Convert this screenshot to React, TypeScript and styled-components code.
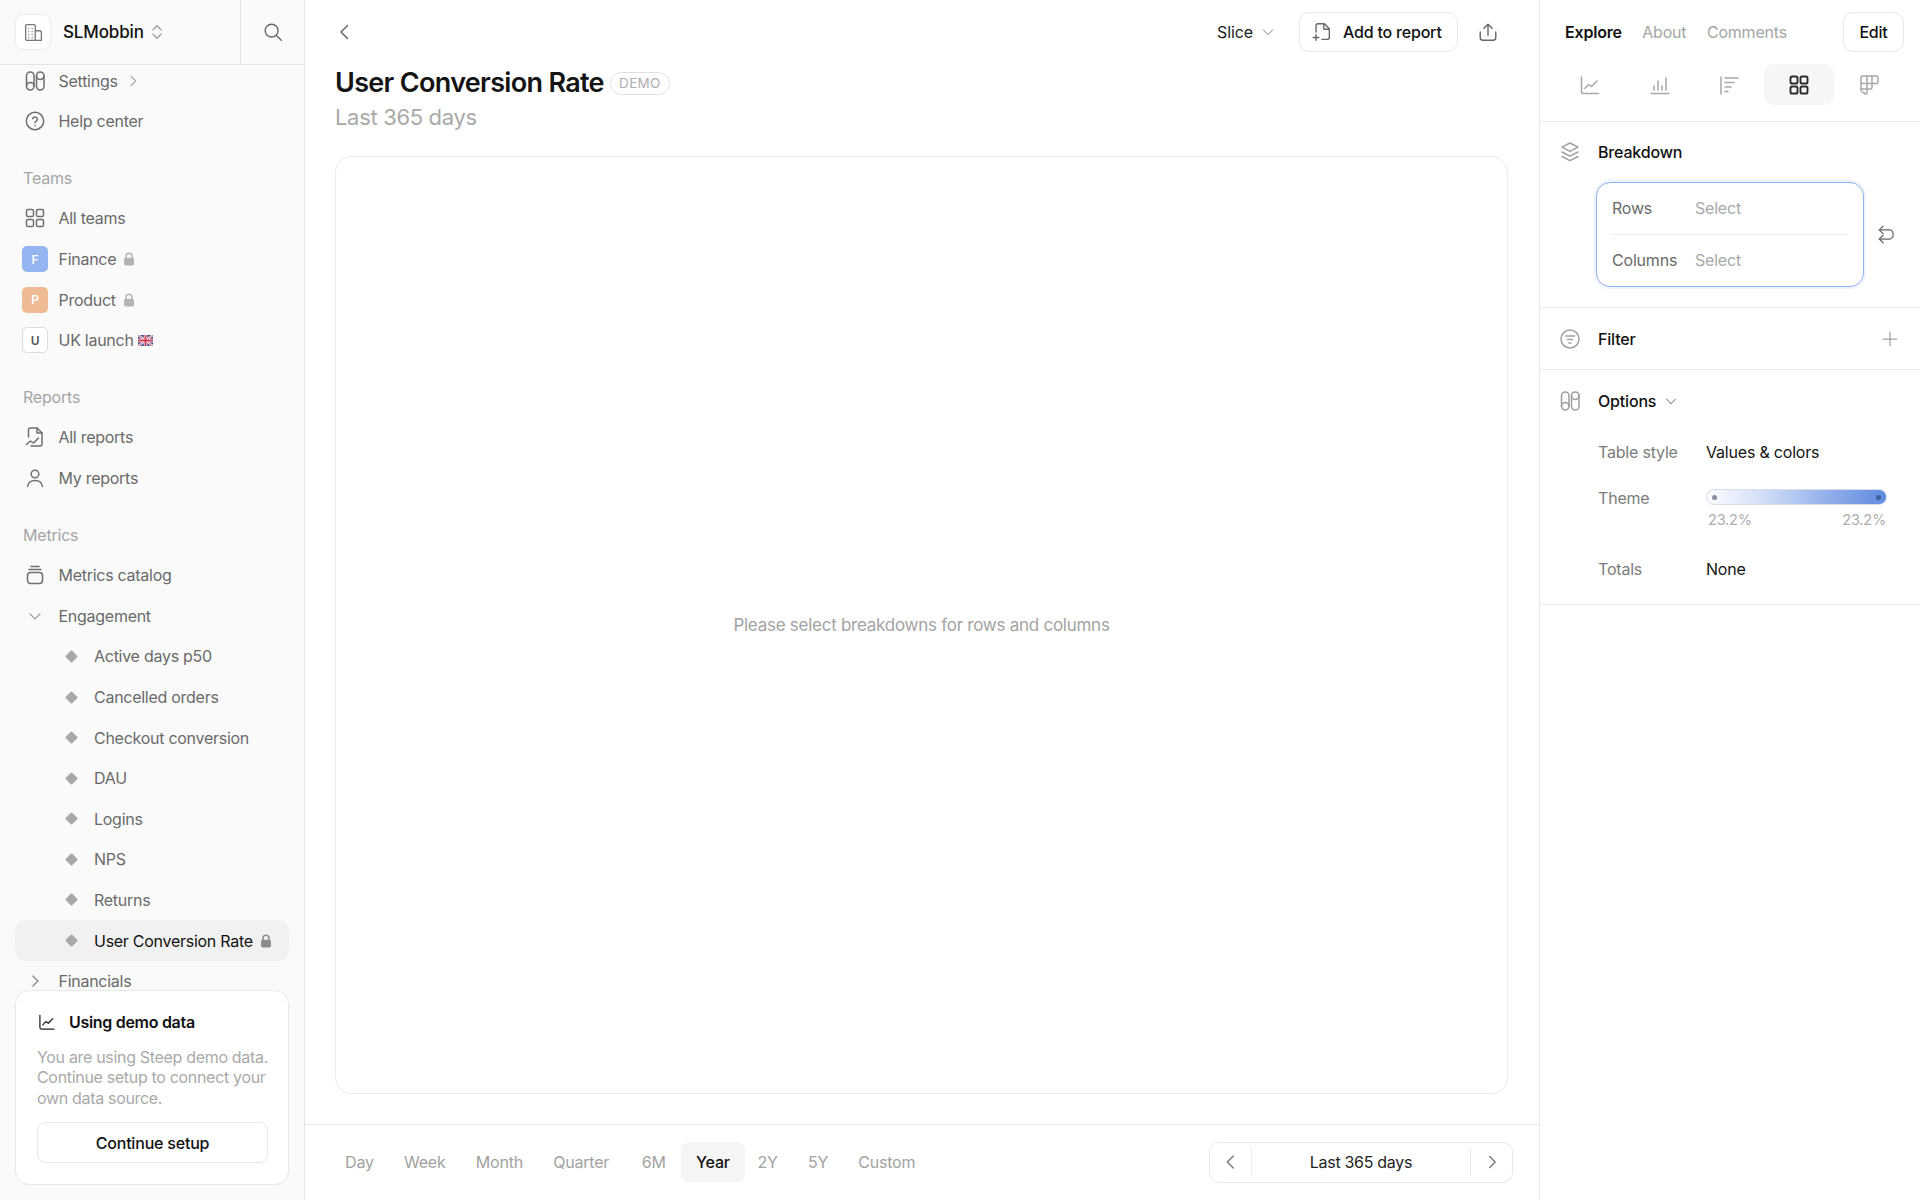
import React from "react";
import styled, { createGlobalStyle } from "styled-components";

const Global = createGlobalStyle`
  html, body { margin: 0; padding: 0; background: #fff; }
  body { font-family: Inter, "Liberation Sans", sans-serif; font-size: 16px; color: #111; -webkit-font-smoothing: antialiased; }
  * { box-sizing: border-box; }
`;

const Page = styled.div`display: flex; width: 1920px; height: 1200px; overflow: hidden;`;

/* ---------- icons ---------- */
const Svg = styled.svg<{ $c?: string; $w?: number }>`
  display: block; flex: none; fill: none; stroke: ${p => p.$c || "#6f6f6f"};
  stroke-width: ${p => p.$w || 1.5}; stroke-linecap: round; stroke-linejoin: round;
`;
type IP = { s?: number; c?: string; w?: number };
const I = ({ s = 24, c, w, children }: IP & { children: React.ReactNode }) => (
  <Svg width={s} height={s} viewBox="0 0 24 24" $c={c} $w={w}>{children}</Svg>
);
const Pills = (p: IP) => (
  <I {...p}><rect x="3.5" y="3" width="7.5" height="18" rx="3.75" /><path d="M3.5 17.250a3.750 3.750 0 0 1 7.500 0" /><rect x="13.5" y="3" width="7.5" height="18" rx="3.75" /><path d="M13.500 6.750a3.750 3.750 0 0 0 7.500 0" /></I>
);
const Help = (p: IP) => (
  <I {...p}><circle cx="12" cy="12" r="8.7" /><path d="M9.6 9.6a2.5 2.5 0 0 1 4.8.8c0 1.6-2.4 2-2.4 3.4" /><path d="M12 16.6v.1" /></I>
);
const Grid = (p: IP) => (
  <I {...p}><rect x="3.5" y="3.5" width="7" height="7" rx="1.6" /><rect x="13.5" y="3.5" width="7" height="7" rx="1.6" /><rect x="3.5" y="13.5" width="7" height="7" rx="1.6" /><rect x="13.5" y="13.5" width="7" height="7" rx="1.6" /></I>
);
const Report = (p: IP) => (
  <I {...p}><path d="M5.5 12V5a2 2 0 0 1 2-2h6.5l5 5v11a2 2 0 0 1-2 2H8" /><path d="M14 3v5h5" /><path d="M3.5 19.5l4-3.5 3 2 5-5" /></I>
);
const User = (p: IP) => (
  <I {...p}><circle cx="12" cy="8" r="3.8" /><path d="M4.5 20.5c.6-4 3.6-6 7.5-6s6.900 2 7.500 6" /></I>
);
const Catalog = (p: IP) => (
  <I {...p}><path d="M8 3.500h8M6 6.500h12" /><rect x="4.500" y="9.500" width="15" height="11" rx="3" /></I>
);
const ChevD = (p: IP) => <I {...p}><path d="M6 9.500l6 6 6-6" /></I>;
const ChevR = (p: IP) => <I {...p}><path d="M9.500 6l6 6-6 6" /></I>;
const ChevL = (p: IP) => <I {...p}><path d="M14.500 5.500L8 12l6.500 6.500" /></I>;
const LineChart = (p: IP) => (
  <I {...p}><path d="M3.500 4v14.500a2 2 0 0 0 2 2h15" /><path d="M7 15.500l3.500-4 3 2 5.500-5.500" /></I>
);
const Bars = (p: IP) => (
  <I {...p}><path d="M3 20.500h18M6 17v-4M10 17V8M14 17v-4M18 17V5" /></I>
);
const Sorted = (p: IP) => (
  <I {...p}><path d="M4 4v17M8 5h13M8 9.500h9M8 14h6M8 18.500h3" /></I>
);
const Pivot = (p: IP) => (
  <I {...p}><path d="M4 5a2 2 0 0 1 2-2h13a2 2 0 0 1 2 2v4a1.500 1.500 0 0 1-1.500 1.500H15v4a1.500 1.500 0 0 1-1.500 1.500H10v3.500a1.500 1.500 0 0 1-3 0A3 3 0 0 1 4 17z" /><path d="M4 10.500h11M4 16h6M10 3v13M15 3v7.500" /></I>
);
const Layers = (p: IP) => (
  <I {...p}><path d="M12 3l8 4.200-8 4.200-8-4.200z" /><path d="M4 12l8 4.200 8-4.200" /><path d="M4 16.500l8 4.200 8-4.200" /></I>
);
const FilterCircle = (p: IP) => (
  <I {...p}><circle cx="12" cy="12" r="9" /><path d="M7.500 9h9M9.500 12.500h5M11 16h2" /></I>
);
const Swap = (p: IP) => (
  <I {...p}><path d="M8.500 2.500L4 7l4.500 4.500" /><path d="M4 7h12a4.500 4.500 0 0 1 4.500 4.500v2A4.500 4.500 0 0 1 16 18H4" /><path d="M8.500 13.500L4 18l4.500 4.500" /></I>
);
const Plus = (p: IP) => <I {...p}><path d="M12 4v16M4 12h16" /></I>;
const Upload = (p: IP) => (
  <I {...p}><path d="M12 15.500V3.500M7.500 8L12 3.500 16.500 8" /><path d="M3.500 12v6a3 3 0 0 0 3 3h11a3 3 0 0 0 3-3v-6" /></I>
);
const FileAdd = (p: IP) => (
  <I {...p}><path d="M5.500 12V5a2 2 0 0 1 2-2h7l5.500 5.500V18a2 2 0 0 1-2 2h-6" /><path d="M14 3v6h6" /><path d="M5.500 15v6M2.500 18h6" /></I>
);
const Search = (p: IP) => (
  <I {...p}><circle cx="10.500" cy="10.500" r="7" /><path d="M15.500 15.500L21 21" /></I>
);
const UpDown = (p: IP) => <I {...p}><path d="M7 9.500l5-5 5 5M7 14.500l5 5 5-5" /></I>;
const Building = (p: IP) => (
  <I {...p}><rect x="3" y="3" width="11" height="18" rx="1.500" /><path d="M14 10h5a2 2 0 0 1 2 2v9H14M6.500 7.500h.01M10.500 7.500h.01M6.500 11h.01M10.500 11h.01M6.500 14.500h.01M10.500 14.500h.01M6.500 18h.01M10.500 18h.01" /></I>
);

const LockSvg = styled.svg`display: block; flex: none;`;
const Lock = ({ c = "#b4b4b4", s = 14 }: { c?: string; s?: number }) => (
  <LockSvg width={s} height={s} viewBox="0 0 14 14">
    <path d="M4 6V4.300a3 3 0 0 1 6 0V6" fill="none" stroke={c} strokeWidth="1.500" />
    <rect x="2" y="5.800" width="10" height="7.700" rx="1.800" fill={c} />
  </LockSvg>
);
const Diamond = styled.span`
  width: 9px; height: 9px; background: #a8a8a8; transform: rotate(45deg); border-radius: 1px; flex: none;
  margin: 0 18.500px 0 1.500px;
`;
const FlagSvg = styled.svg`display: block; flex: none; border-radius: 1px; margin-left: 4px;`;
const Flag = () => (
  <FlagSvg width="15" height="11" viewBox="0 0 15 11">
    <rect width="15" height="11" fill="#3b4a86" />
    <path d="M0 0l15 11M15 0L0 11" stroke="#fff" strokeWidth="2.200" />
    <path d="M0 0l15 11M15 0L0 11" stroke="#cf3b52" strokeWidth=".8" />
    <path d="M7.500 0v11M0 5.500h15" stroke="#fff" strokeWidth="3.600" />
    <path d="M7.500 0v11M0 5.500h15" stroke="#cf3b52" strokeWidth="2" />
  </FlagSvg>
);

/* ---------- sidebar ---------- */
const Sidebar = styled.aside`
  width: 305px; flex: none; display: flex; flex-direction: column; height: 100%;
  background: #fafafa; border-right: 1px solid #e6e6e6; padding-bottom: 15px;
`;
const SideHead = styled.header`display: flex; height: 65px; flex: none; border-bottom: 1px solid #e4e4e4;`;
const Workspace = styled.div`
  width: 241px; display: flex; align-items: center; padding-left: 15px; border-right: 1px solid #e4e4e4;
`;
const LogoBox = styled.div`
  width: 36px; height: 36px; border: 1px solid #ececec; background: #fff; border-radius: 8px;
  display: flex; align-items: center; justify-content: center; margin-right: 12px;
`;
const WsName = styled.span`font-size: 17px; font-weight: 500; color: #111; letter-spacing: -0.15px; margin-right: 3px;`;
const SearchBtn = styled.div`flex: 1; display: flex; align-items: center; justify-content: center;`;
const NavScroll = styled.nav`flex: 1; min-height: 0; overflow: hidden; padding: 0 15px;`;
const NavInner = styled.div`margin-top: -4.600px;`;
const Row = styled.div<{ $indent?: boolean; $active?: boolean }>`
  height: 40.600px; display: flex; align-items: center; border-radius: 10px;
  padding-left: ${p => (p.$indent ? "50px" : "8px")};
  font-size: 16px; letter-spacing: -0.27px; white-space: nowrap;
  color: ${p => (p.$active ? "#111" : "#6a6a6a")};
  background: ${p => (p.$active ? "#f1f1f1" : "transparent")};
`;
const IconSlot = styled.span`width: 24px; margin-right: 11.500px; display: flex; align-items: center; justify-content: center; flex: none;`;
const SectionLabel = styled.div`
  height: 40.600px; margin-top: 16px; padding-left: 8px; display: flex; align-items: center;
  font-size: 16px; color: #a6a6a6; letter-spacing: -0.2px;
`;
const Avatar = styled.span<{ $bg?: string }>`
  width: 26px; height: 26px; border-radius: 5px; margin: 0 -1px;
  background: ${p => p.$bg || "#fff"}; color: ${p => (p.$bg ? "#fff" : "#555")};
  border: ${p => (p.$bg ? "none" : "1px solid #dcdcdc")};
  display: flex; align-items: center; justify-content: center; font-size: 12px; font-weight: 600;
`;
const Trail = styled.span`margin-left: 6px; display: inline-flex;`;
const DemoCard = styled.section`
  flex: none; height: 195px; margin: 0 15px; background: #fff; border: 1px solid #e8e8e8; border-radius: 14px;
  padding: 20px 20px 0 21px; display: flex; flex-direction: column;
`;
const DemoTitle = styled.div`display: flex; align-items: center; gap: 12px; font-size: 16px; font-weight: 600; color: #111; height: 22px; letter-spacing: -0.3px;`;
const DemoText = styled.p`margin: 14px 0 14px; font-size: 16px; line-height: 20.400px; color: #a9a9a9; letter-spacing: -0.32px; white-space: nowrap;`;
const DemoBtn = styled.div`
  height: 41px; border: 1px solid #e8e8e8; border-radius: 8px; display: flex; align-items: center; justify-content: center;
  font-size: 16px; font-weight: 500; color: #111; letter-spacing: -0.2px;
`;

/* ---------- main ---------- */
const Main = styled.main`flex: 1; min-width: 0; display: flex; flex-direction: column; border-right: 1px solid #e8e8e8; height: 100%;`;
const TopBar = styled.div`height: 65px; flex: none; display: flex; align-items: center; padding: 0 40px 1px 28px;`;
const Spacer = styled.div`flex: 1;`;
const SliceBtn = styled.div`display: flex; align-items: center; gap: 6px; font-size: 16px; color: #222; margin-right: 22px; letter-spacing: -0.1px;`;
const OutlineBtn = styled.div`
  height: 40px; border: 1px solid #e8e8e8; border-radius: 10px; display: flex; align-items: center;
  font-size: 16px; font-weight: 450; color: #111; background: #fff; letter-spacing: -0.2px;
`;
const AddBtn = styled(OutlineBtn)`width: 159px; padding-left: 11px; gap: 10px; margin-right: 19px;`;
const TitleBlock = styled.div`padding: 0 30px; flex: none; height: 91px;`;
const TitleRow = styled.div`display: flex; align-items: center; height: 36px;`;
const Title = styled.h1`margin: 0; font-size: 27px; font-weight: 600; color: #141414; letter-spacing: -0.68px; line-height: 36px;`;
const Badge = styled.span`
  margin-left: 6px; width: 60px; height: 23px; border: 1px solid #e0e0e0; border-radius: 12px; display: flex;
  align-items: center; justify-content: center; font-size: 13.500px; color: #aeaeae; letter-spacing: 0.3px;
`;
const Subtitle = styled.div`font-size: 22px; color: #a9a9a9; line-height: 34px; letter-spacing: -0.33px; margin-top: -1px;`;
const ChartCard = styled.div`
  flex: 1; margin: 0 31px 30px 30px; border: 1px solid #ebebeb; border-radius: 16px; display: flex; align-items: center;
  justify-content: center; font-size: 17px; color: #a3a3a3; letter-spacing: -0.26px;
`;
const BottomBar = styled.div`
  height: 76px; flex: none; border-top: 1px solid #ebebeb; display: flex; align-items: center;
  padding: 0 25px 1px 25px; justify-content: space-between;
`;
const RangeTabs = styled.div`display: flex;`;
const RangeTab = styled.div<{ $active?: boolean; $gap?: number }>`
  height: 40px; padding: 0 15.100px; display: flex; align-items: center; border-radius: 8px; font-size: 16px; letter-spacing: -0.2px;
  margin-left: ${p => p.$gap || 0}px;
  color: ${p => (p.$active ? "#111" : "#a2a2a2")};
  font-weight: ${p => (p.$active ? 500 : 400)};
  background: ${p => (p.$active ? "#f5f5f5" : "transparent")};
`;
const Pager = styled.div`
  width: 304px; height: 41px; border: 1px solid #e8e8e8; border-radius: 10px; display: flex; align-items: center; margin-right: 1px;
`;
const PagerSide = styled.div`width: 41px; display: flex; justify-content: center; align-items: center; height: 100%;`;
const PagerMid = styled.div`
  flex: 1; height: 28px; border: solid #ebebeb; border-width: 0 1px; display: flex; align-items: center; justify-content: center;
  font-size: 16px; color: #222; letter-spacing: -0.3px;
`;

/* ---------- right panel ---------- */
const Panel = styled.aside`width: 380px; flex: none; display: flex; flex-direction: column;`;
const PanelHead = styled.div`height: 122px; flex: none; border-bottom: 1px solid #ebebeb; padding: 12px 16px 0 15px;`;
const PanelTabs = styled.div`display: flex; align-items: center; height: 40px; padding-left: 10px;`;
const PanelTab = styled.span<{ $active?: boolean }>`
  font-size: 16px; margin-right: 20.500px; letter-spacing: -0.2px;
  color: ${p => (p.$active ? "#111" : "#a5a5a5")};
  font-weight: ${p => (p.$active ? 600 : 400)};
`;
const EditBtn = styled(OutlineBtn)`width: 61px; justify-content: center; margin-left: auto;`;
const ChartTypes = styled.div`display: flex; margin-top: 12px;`;
const ChartType = styled.div<{ $active?: boolean }>`
  width: 70px; height: 41px; border-radius: 10px; display: flex; align-items: center; justify-content: center;
  background: ${p => (p.$active ? "#f6f6f6" : "transparent")};
`;
const Section = styled.section`border-bottom: 1px solid #ebebeb; flex: none;`;
const SectionHead = styled.div<{ $h?: number }>`height: ${p => p.$h || 61}px; display: flex; align-items: center; padding: 0 19px 0 18px; font-size: 16px; font-weight: 500; color: #111; letter-spacing: -0.18px;`;
const SectionIcon = styled.span`width: 24px; margin-right: 16px; display: flex; justify-content: center; flex: none;`;
const BreakdownBody = styled.div`display: flex; align-items: center; padding: 0 0 20px 56px;`;
const SelectBox = styled.div`
  width: 268px; height: 105px; border: 1.500px solid #8fb2ea; border-radius: 14px; padding: 0 15px;
  box-shadow: 0 0 0 2px #eef3fc; display: flex; flex-direction: column;
`;
const SelectRow = styled.div<{ $first?: boolean }>`
  flex: 1; display: flex; align-items: center; font-size: 16px; letter-spacing: -0.2px; padding-bottom: 2px;
  border-bottom: ${p => (p.$first ? "1.500px solid #ececec" : "none")};
`;
const SelectLabel = styled.span`width: 83px; color: #6a6a6a;`;
const SelectValue = styled.span`color: #a8a8a8;`;
const SwapSlot = styled.span`margin: 0 0 2px 12px;`;
const PlusSlot = styled.span`margin: 0 1px 0 auto;`;
const OptionsBody = styled.div`padding: 9px 0 23px 58px; display: flex; flex-direction: column;`;
const OptRow = styled.div<{ $h: number }>`height: ${p => p.$h}px; display: flex; align-items: flex-start; font-size: 16px; letter-spacing: -0.2px; line-height: 24px;`;
const OptLabel = styled.span`width: 108px; color: #7c7c7c; flex: none;`;
const OptValue = styled.span`color: #141414;`;
const ThemeCol = styled.div`width: 181px; margin-top: 3px;`;
const ThemeBar = styled.div`
  height: 16px; border-radius: 8px; border: 1px solid #d9deea; position: relative;
  background: linear-gradient(90deg, #fbfcff 0%, #d4e0f8 30%, #8eabe9 70%, #5f8be0 100%);
`;
const ThemeDot = styled.span<{ $right?: boolean; $c: string }>`
  position: absolute; top: 4.500px; width: 5px; height: 5px; border-radius: 50%; background: ${p => p.$c};
  ${p => (p.$right ? "right: 5px;" : "left: 5px;")}
`;
const ThemeLabels = styled.div`display: flex; justify-content: space-between; padding: 0 1px 0 2px; font-size: 14.500px; color: #adadad; line-height: 20px; margin-top: 5px;`;

const metrics = ["Active days p50", "Cancelled orders", "Checkout conversion", "DAU", "Logins", "NPS", "Returns"];
const ranges = ["Day", "Week", "Month", "Quarter", "6M", "Year", "2Y", "5Y", "Custom"];

export default function App() {
  return (
    <Page>
      <Global />
      <Sidebar>
        <SideHead>
          <Workspace>
            <LogoBox><Building s={21} c="#777" /></LogoBox>
            <WsName>SLMobbin</WsName>
            <UpDown s={20} c="#999" />
          </Workspace>
          <SearchBtn><Search s={22} c="#666" /></SearchBtn>
        </SideHead>
        <NavScroll>
          <NavInner>
            <Row><IconSlot><Pills /></IconSlot>Settings<Trail><ChevR s={18} c="#aaa" /></Trail></Row>
            <Row><IconSlot><Help /></IconSlot>Help center</Row>
            <SectionLabel>Teams</SectionLabel>
            <Row><IconSlot><Grid /></IconSlot>All teams</Row>
            <Row><IconSlot><Avatar $bg="#94b5f2">F</Avatar></IconSlot>Finance<Trail><Lock /></Trail></Row>
            <Row><IconSlot><Avatar $bg="#efbb94">P</Avatar></IconSlot>Product<Trail><Lock /></Trail></Row>
            <Row><IconSlot><Avatar>U</Avatar></IconSlot>UK launch<Flag /></Row>
            <SectionLabel>Reports</SectionLabel>
            <Row><IconSlot><Report /></IconSlot>All reports</Row>
            <Row><IconSlot><User /></IconSlot>My reports</Row>
            <SectionLabel>Metrics</SectionLabel>
            <Row><IconSlot><Catalog /></IconSlot>Metrics catalog</Row>
            <Row><IconSlot><ChevD s={20} c="#999" /></IconSlot>Engagement</Row>
            {metrics.map(m => <Row $indent key={m}><Diamond />{m}</Row>)}
            <Row $indent $active><Diamond />User Conversion Rate<Trail><Lock c="#8c8c8c" /></Trail></Row>
            <Row><IconSlot><ChevR s={20} c="#888" /></IconSlot>Financials</Row>
          </NavInner>
        </NavScroll>
        <DemoCard>
          <DemoTitle><LineChart s={20} c="#222" />Using demo data</DemoTitle>
          <DemoText>You are using Steep demo data.<br />Continue setup to connect your<br />own data source.</DemoText>
          <DemoBtn>Continue setup</DemoBtn>
        </DemoCard>
      </Sidebar>

      <Main>
        <TopBar>
          <ChevL s={24} c="#666" />
          <Spacer />
          <SliceBtn>Slice<ChevD s={18} c="#aaa" /></SliceBtn>
          <AddBtn><FileAdd s={22} c="#666" />Add to report</AddBtn>
          <Upload s={22} c="#666" />
        </TopBar>
        <TitleBlock>
          <TitleRow><Title>User Conversion Rate</Title><Badge>DEMO</Badge></TitleRow>
          <Subtitle>Last 365 days</Subtitle>
        </TitleBlock>
        <ChartCard>Please select breakdowns for rows and columns</ChartCard>
        <BottomBar>
          <RangeTabs>
            {ranges.map(r => (
              <RangeTab key={r} $active={r === "Year"} $gap={r === "6M" ? 2.5 : r === "2Y" ? -2.5 : 0}>{r}</RangeTab>
            ))}
          </RangeTabs>
          <Pager>
            <PagerSide><ChevL s={22} c="#777" /></PagerSide>
            <PagerMid>Last 365 days</PagerMid>
            <PagerSide><ChevR s={22} c="#777" /></PagerSide>
          </Pager>
        </BottomBar>
      </Main>

      <Panel>
        <PanelHead>
          <PanelTabs>
            <PanelTab $active>Explore</PanelTab>
            <PanelTab>About</PanelTab>
            <PanelTab>Comments</PanelTab>
            <EditBtn>Edit</EditBtn>
          </PanelTabs>
          <ChartTypes>
            <ChartType><LineChart c="#a8a8a8" /></ChartType>
            <ChartType><Bars c="#a8a8a8" /></ChartType>
            <ChartType><Sorted c="#a8a8a8" /></ChartType>
            <ChartType $active><Grid c="#2a2a2a" w={1.9} /></ChartType>
            <ChartType><Pivot c="#a8a8a8" /></ChartType>
          </ChartTypes>
        </PanelHead>
        <Section>
          <SectionHead $h={60}><SectionIcon><Layers c="#a0a0a0" /></SectionIcon>Breakdown</SectionHead>
          <BreakdownBody>
            <SelectBox>
              <SelectRow $first><SelectLabel>Rows</SelectLabel><SelectValue>Select</SelectValue></SelectRow>
              <SelectRow><SelectLabel>Columns</SelectLabel><SelectValue>Select</SelectValue></SelectRow>
            </SelectBox>
            <SwapSlot><Swap s={20} c="#666" /></SwapSlot>
          </BreakdownBody>
        </Section>
        <Section>
          <SectionHead><SectionIcon><FilterCircle c="#a0a0a0" /></SectionIcon>Filter<PlusSlot><Plus s={20} c="#a0a0a0" /></PlusSlot></SectionHead>
        </Section>
        <Section>
          <SectionHead><SectionIcon><Pills c="#a0a0a0" /></SectionIcon>Options<Trail><ChevD s={18} c="#999" /></Trail></SectionHead>
          <OptionsBody>
            <OptRow $h={46}><OptLabel>Table style</OptLabel><OptValue>Values &amp; colors</OptValue></OptRow>
            <OptRow $h={71}>
              <OptLabel>Theme</OptLabel>
              <ThemeCol>
                <ThemeBar><ThemeDot $c="#8a8f9c" /><ThemeDot $right $c="#3f5f9f" /></ThemeBar>
                <ThemeLabels><span>23.2%</span><span>23.2%</span></ThemeLabels>
              </ThemeCol>
            </OptRow>
            <OptRow $h={24}><OptLabel>Totals</OptLabel><OptValue>None</OptValue></OptRow>
          </OptionsBody>
        </Section>
      </Panel>
    </Page>
  );
}
